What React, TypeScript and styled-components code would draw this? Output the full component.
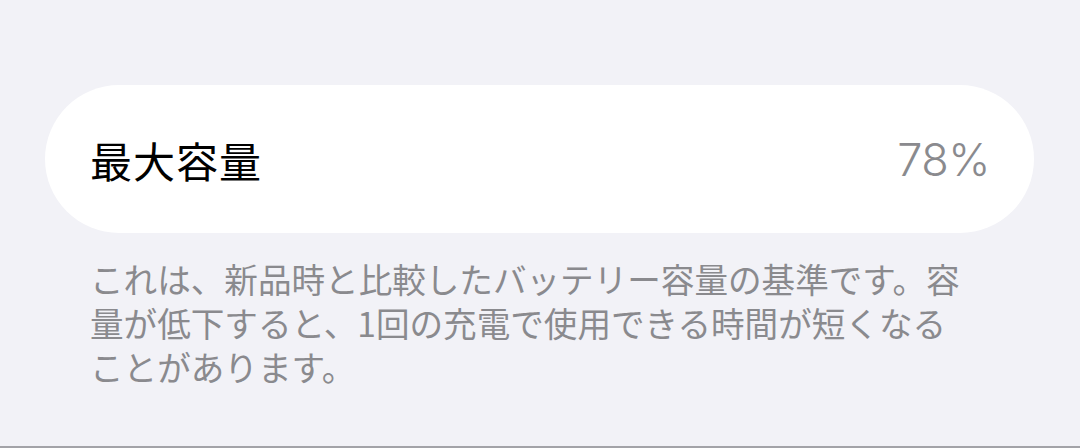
import styled, { createGlobalStyle } from "styled-components";

const GlobalStyle = createGlobalStyle`
    html, body {
        margin: 0;
        padding: 0;
        background: #f2f2f7;
    }
    body {
        font-family: "Inter", "Noto Sans CJK JP", sans-serif;
        -webkit-font-smoothing: antialiased;
    }
`;

const Screen = styled.div`
    width: 1080px;
    height: 448px;
    box-sizing: border-box;
    padding: 85px 46px 0 45px;
    background: #f2f2f7;
    border-bottom: 2px solid #a3a3a8;
`;

const Card = styled.div`
    display: flex;
    align-items: center;
    justify-content: space-between;
    height: 148px;
    box-sizing: border-box;
    padding: 0 44px 0 45px;
    background: #ffffff;
    border-radius: 74px;
`;

const Label = styled.span`
    font-family: "Noto Sans CJK JP", sans-serif;
    font-size: 42px;
    color: #000000;
    letter-spacing: 1px;
`;

const Value = styled.span`
    font-family: "Inter", "Noto Sans", sans-serif;
    font-size: 45px;
    font-weight: 300;
    color: #8a8a8e;
    letter-spacing: -0.5px;
`;

const Footnote = styled.p`
    margin: 24px 0 0 45px;
    width: 880px;
    font-family: "Noto Sans CJK JP", sans-serif;
    font-size: 33.6px;
    line-height: 44px;
    color: #8a8a8e;
`;

export default function App() {
    return (
        <>
            <GlobalStyle/>
            <Screen>
                <Card>
                    <Label>最大容量</Label>
                    <Value>78%</Value>
                </Card>
                <Footnote>
                    これは、新品時と比較したバッテリー容量の基準です。容量が低下すると、1回の充電で使用できる時間が短くなることがあります。
                </Footnote>
            </Screen>
        </>
    );
}
